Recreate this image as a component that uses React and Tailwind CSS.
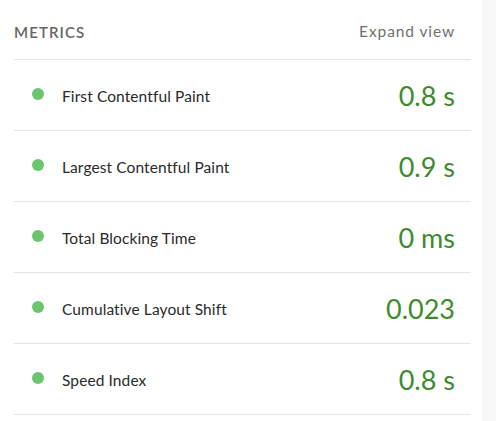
import React from 'react';

const metrics = [
    { label: 'First Contentful Paint', value: '0.8 s' },
    { label: 'Largest Contentful Paint', value: '0.9 s' },
    { label: 'Total Blocking Time', value: '0 ms' },
    { label: 'Cumulative Layout Shift', value: '0.023' },
    { label: 'Speed Index', value: '0.8 s' },
];

const App = () => {
    return (
        <div className="flex w-[496px] h-[421px] bg-white overflow-hidden" style={{ fontFamily: 'Lato, "Open Sans", sans-serif' }}>
            <div className="w-[482px] pl-[14px] pr-[11px]">
                {/* Header */}
                <div className="h-[60px] flex items-center justify-between border-b border-[#e4e4e4] pt-[5px]">
                    <span className="text-[15px] font-semibold tracking-[1.1px] text-[#666666]">METRICS</span>
                    <span className="text-[15.5px] tracking-[0.9px] text-[#707070] mr-[16px]">Expand view</span>
                </div>

                {/* Rows */}
                {metrics.map((m) => (
                    <div key={m.label} className="h-[71px] flex items-center border-b border-[#e4e4e4] pt-[3px]">
                        <div className="w-[12px] h-[12px] rounded-full bg-[#6cc46f] ml-[18px] mb-[6px]" />
                        <span className="ml-[18px] text-[15.5px] tracking-[0.1px] text-[#2a2a2a] flex-1">{m.label}</span>
                        <span className="mr-[16px] text-[27px] text-[#3d8b2c] leading-none mb-[2px]">{m.value}</span>
                    </div>
                ))}
            </div>
            <div className="w-[14px] h-full bg-[#f8f8f8]" />
        </div>
    );
};

export default App;
